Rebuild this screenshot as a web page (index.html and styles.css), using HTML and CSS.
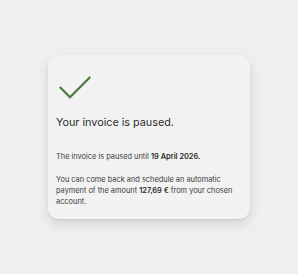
FILE: index.html
```html
<!DOCTYPE html>
<html>
<head>
<meta charset="utf-8">
<link rel="stylesheet" href="styles.css">
</head>
<body>
<div class="card">
  <svg class="check" width="34" height="25" viewBox="0 0 34 25">
    <path d="M0.8 12 L11 22.3 L31.2 2" fill="none" stroke="#4c7a40" stroke-width="2.2"/>
  </svg>
  <h1 class="title">Your invoice is paused.</h1>
  <p class="text">The invoice is paused until <b>19 April 2026.</b></p>
  <p class="text">You can come back and schedule an automatic payment of the amount <b>127,69 €</b> from your chosen account.</p>
</div>
</body>
</html>
```
FILE: styles.css
```css
html, body {
  margin: 0;
  padding: 0;
}
body {
  width: 298px;
  height: 274px;
  background: #f0efed;
  display: flex;
  align-items: center;
  justify-content: center;
  font-family: Inter, "Noto Sans", sans-serif;
  color: #333;
}
.card {
  box-sizing: border-box;
  width: 202px;
  height: 164px;
  background: #f2f2f2;
  border-radius: 11px;
  box-shadow: 0 5px 11px rgba(0,0,0,0.12), 0 1px 2px rgba(0,0,0,0.06);
  padding: 20px 8px 12px 8px;
  display: flex;
  flex-direction: column;
}
.check {
  display: block;
  margin-left: 3px;
}
.title {
  margin: 16px 0 0 0;
  font-size: 10.8px;
  font-weight: 400;
  line-height: 14px;
  color: #2e2e2e;
}
.text {
  margin: 21px 0 0 0;
  font-size: 7.4px;
  line-height: 11px;
  color: #3a3a3a;
}
.text + .text {
  margin-top: 12px;
}
.text b {
  font-weight: 600;
  color: #2a2a2a;
}
```
